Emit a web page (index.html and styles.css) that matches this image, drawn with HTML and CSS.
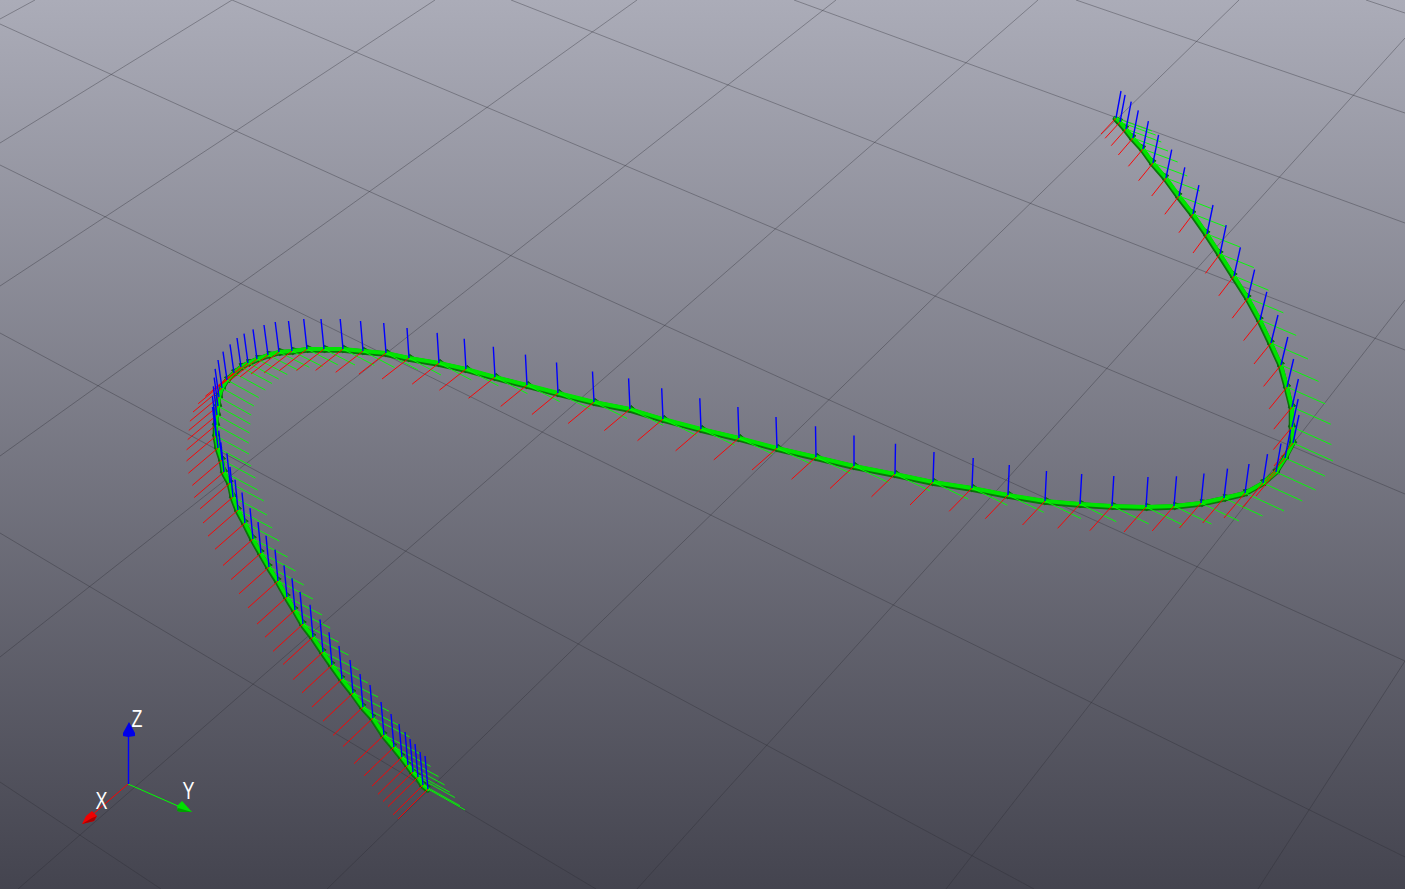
FILE: index.html
```html
<!DOCTYPE html>
<html lang="en">
<head>
<meta charset="utf-8">
<title>3D viewport</title>
<link rel="stylesheet" href="styles.css">
</head>
<body>
<main class="viewport">
  <svg class="scene" viewBox="0 0 1405 889" width="1405" height="889" xmlns="http://www.w3.org/2000/svg">
    <path class="grid" d="M0 24L1405 661M232 0L1405 494M511 0L1405 350M794 0L1405 223M1076 0L1405 113M1366 0L1405 13M0 165L1405 857M0 333L1034 889M0 533L596 889M0 782L161 889M35 0L0 19M232 0L0 143M435 0L0 286M637 0L0 456M836 0L0 657M1038 0L18 889M1239 0L327 889M1405 38L637 889M1405 300L946 889M1405 661L1258 889"/>
    <g id="trajectory"></g>
    <g class="triad">
      <path class="axis axis-x" d="M128 784L92 815"/>
      <path class="axis axis-y" d="M128 784L178 806"/>
      <path class="axis axis-z" d="M128.5 784V735"/>
      <polygon class="cone-x" points="82,824 86,816 92,811 97,816 94,821"/>
      <polygon class="cone-x-dark" points="82,824 94,821 97,816 92,818"/>
      <polygon class="cone-y" points="192,812 182,801 177,806 178,811 181,812"/>
      <polygon class="cone-y-dark" points="192,812 178,808 177,811 181,812"/>
      <polygon class="cone-z" points="129,722 123,733 123,736 128,737 135,736 135,733"/>
      <text class="label" transform="translate(131.5 727) scale(.78 1)">Z</text>
      <text class="label" transform="translate(182.5 799) scale(.78 1)">Y</text>
      <text class="label" transform="translate(95.5 808.5) scale(.78 1)">X</text>
    </g>
  </svg>
</main>
<script src="script.js"></script>
</body>
</html>
```
FILE: styles.css
```css
html, body {
  margin: 0;
  padding: 0;
  height: 100%;
  overflow: hidden;
  background: #44444f;
}
.viewport {
  width: 1405px;
  height: 889px;
  background: linear-gradient(to bottom, #abacb8 0%, #44444f 100%);
}
.scene {
  display: block;
}
.grid {
  fill: none;
  stroke: #2c2c34;
  stroke-opacity: 0.36;
  stroke-width: 1;
}
.curve-base {
  fill: none;
  stroke: #0b760b;
  stroke-width: 5.4;
  stroke-linejoin: round;
  stroke-linecap: round;
}
.curve-top {
  fill: none;
  stroke: #00e400;
  stroke-width: 3.9;
  stroke-linejoin: round;
  stroke-linecap: round;
}
.node-cone {
  fill: #0b6f0b;
  stroke: #0b6f0b;
  stroke-width: 1;
  stroke-linejoin: round;
}
.vec {
  fill: none;
  stroke-width: 0.95;
}
.vec-x {
  stroke: #ff0000;
}
.vec-y {
  stroke: #00ff00;
}
.vec-z {
  stroke: #0000ff;
  stroke-width: 1.4;
}
.axis {
  fill: none;
  stroke-width: 1;
}
.axis-x { stroke: #ff0000; }
.axis-y { stroke: #00ff00; }
.axis-z { stroke: #0000ff; stroke-width: 1.4; }
.cone-x { fill: #f00000; }
.cone-x-dark { fill: #a80000; }
.cone-y { fill: #00e000; }
.cone-y-dark { fill: #00a000; }
.cone-z { fill: #0000e8; }
.label {
  font-family: "Liberation Sans", Arial, sans-serif;
  font-size: 23px;
  fill: #ffffff;
}
```
FILE: script.js
```js
var NS = "http://www.w3.org/2000/svg";
var nodes = [
  [1116,118],[1120,122],[1126,129],[1133,138],[1143,149],[1153,163],[1166,178],[1179,196],[1193,214],[1207,234],
  [1220,254],[1234,276],[1248,298],[1260,320],[1271,343],[1281,365],[1287,387],[1292,407],[1292,427],[1293,443],
  [1285,458],[1276,472],[1263,483],[1245,493],[1224,498],[1201,503],[1174,506],[1146,507],[1112,506],[1080,504],
  [1045,501],[1008,495],[972,488],[933,482],[895,474],[854,466],[816,457],[777,448],[739,438],[701,429],
  [663,419],[630,409],[594,402],[558,393],[527,385],[495,377],[466,369],[439,363],[409,358],[386,353],
  [363,351],[343,349],[324,349],[307,349],[292,351],[279,352],[268,355],[257,359],[248,363],[241,367],
  [234,373],[227,380],[222,388],[219,397],[218,406],[217,415],[216,425],[216,436],[218,448],[222,460],
  [224,472],[230,483],[233,497],[238,510],[245,523],[253,539],[261,553],[269,567],[278,581],[287,597],
  [295,610],[303,624],[313,637],[323,652],[332,665],[342,679],[353,693],[363,707],[373,718],[384,735],
  [394,747],[402,757],[408,765],[413,772],[418,777],[423,785],[428,789]
];
// index, red dx,dy, green dx,dy, blue dx,dy
var frames = [
  [0,-15,16,36,13,5,-27],
  [9,-14,19,33,13,6,-29],
  [14,-17,21,37,16,7,-28],
  [19,-19,23,40,18,6,-28],
  [23,-21,25,39,18,4,-29],
  [27,-22,25,37,18,2,-30],
  [33,-23,23,35,17,1,-30],
  [37,-25,22,34,16,-1,-31],
  [48,-27,21,32,17,-2,-30],
  [56,-28,22,30,15,-4,-30],
  [62,-29,24,32,18,-4,-28],
  [72,-30,26,34,18,-3,-30],
  [85,-30,28,36,18,-3,-33],
  [96,-30,30,37,21,-3,-33]
];
function frameAt(i) {
  for (var k = 0; k < frames.length - 1; k++) {
    var a = frames[k], b = frames[k + 1];
    if (i >= a[0] && i <= b[0]) {
      var t = (i - a[0]) / (b[0] - a[0]);
      return a.map(function (v, n) { return v + (b[n] - v) * t; });
    }
  }
  return frames[frames.length - 1];
}
function add(parent, tag, cls, attrs) {
  var el = document.createElementNS(NS, tag);
  el.setAttribute("class", cls);
  for (var key in attrs) el.setAttribute(key, attrs[key]);
  parent.appendChild(el);
  return el;
}
function f(v) { return v.toFixed(1); }
var root = document.getElementById("trajectory");
var pts = nodes.map(function (p) { return p.join(","); }).join(" ");
var shifted = nodes.map(function (p) { return f(p[0] - 0.6) + "," + f(p[1] + 1); }).join(" ");
add(root, "polyline", "curve-base", { points: shifted });
for (var i = 1; i < nodes.length; i++) {
  var p = nodes[i], q = nodes[i - 1];
  var dx = q[0] - p[0], dy = q[1] - p[1];
  var len = Math.sqrt(dx * dx + dy * dy) || 1;
  var ux = dx / len, uy = dy / len;
  var poly = [
    [p[0] - uy * 3.8, p[1] + ux * 3.8],
    [p[0] + ux * 8, p[1] + uy * 8],
    [p[0] + uy * 3.8, p[1] - ux * 3.8]
  ].map(function (c) { return f(c[0]) + "," + f(c[1]); }).join(" ");
  add(root, "polygon", "node-cone", { points: poly });
}
add(root, "polyline", "curve-top", { points: pts });
var d = { x: "", y: "", z: "" };
nodes.forEach(function (n, i) {
  var v = frameAt(i), m = "M" + n[0] + " " + n[1] + "l";
  d.x += m + f(v[1]) + " " + f(v[2]);
  d.y += m + f(v[3]) + " " + f(v[4]);
  d.z += m + f(v[5]) + " " + f(v[6]);
});
add(root, "path", "vec vec-y", { d: d.y });
add(root, "path", "vec vec-x", { d: d.x });
add(root, "path", "vec vec-z", { d: d.z });
```
